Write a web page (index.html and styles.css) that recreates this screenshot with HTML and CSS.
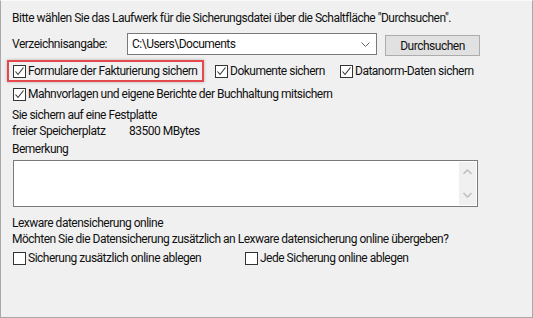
FILE: index.html
```html
<!DOCTYPE html>
<html>
<head>
  <title>Datensicherung</title>
  <link rel="stylesheet" href="styles.css">
</head>
<body>
  <div class="dialog">
    <div class="line">Bitte wählen Sie das Laufwerk für die Sicherungsdatei über die Schaltfläche "Durchsuchen".</div>

    <div class="dir-row">
      <span class="dir-label">Verzeichnisangabe:</span>
      <div class="combo">
        <span>C:\Users\Documents</span>
        <svg class="chevron" width="9" height="5" viewBox="0 0 9 5"><path d="M0.5 0.5 L4.5 4.5 L8.5 0.5" fill="none" stroke="#606060" stroke-width="1"/></svg>
      </div>
      <button class="btn">Durchsuchen</button>
    </div>

    <div class="check-row first">
      <label class="check w1 marked">
        <span class="box"><svg width="11" height="11" viewBox="0 0 11 11"><path d="M1.5 5.5 L4 8.5 L9.5 1.5" fill="none" stroke="#333" stroke-width="1.1"/></svg></span>
        Formulare der Fakturierung sichern
      </label>
      <label class="check w2">
        <span class="box"><svg width="11" height="11" viewBox="0 0 11 11"><path d="M1.5 5.5 L4 8.5 L9.5 1.5" fill="none" stroke="#333" stroke-width="1.1"/></svg></span>
        Dokumente sichern
      </label>
      <label class="check">
        <span class="box"><svg width="11" height="11" viewBox="0 0 11 11"><path d="M1.5 5.5 L4 8.5 L9.5 1.5" fill="none" stroke="#333" stroke-width="1.1"/></svg></span>
        Datanorm-Daten sichern
      </label>
    </div>

    <div class="check-row second">
      <label class="check">
        <span class="box"><svg width="11" height="11" viewBox="0 0 11 11"><path d="M1.5 5.5 L4 8.5 L9.5 1.5" fill="none" stroke="#333" stroke-width="1.1"/></svg></span>
        Mahnvorlagen und eigene Berichte der Buchhaltung mitsichern
      </label>
    </div>

    <div class="line disk">Sie sichern auf eine Festplatte</div>
    <div class="line"><span class="free-label">freier Speicherplatz</span>83500 MBytes</div>
    <div class="line remark">Bemerkung</div>

    <div class="memo">
      <div class="memo-scroll">
        <svg width="9" height="6" viewBox="0 0 9 6"><path d="M0.5 5 L4.5 1 L8.5 5" fill="none" stroke="#c2c2c2" stroke-width="1.6"/></svg>
        <svg width="9" height="6" viewBox="0 0 9 6"><path d="M0.5 1 L4.5 5 L8.5 1" fill="none" stroke="#c2c2c2" stroke-width="1.6"/></svg>
      </div>
    </div>

    <div class="line online">Lexware datensicherung online</div>
    <div class="line">Möchten Sie die Datensicherung zusätzlich an Lexware datensicherung online übergeben?</div>

    <div class="check-row third">
      <label class="check w3">
        <span class="box"></span>
        Sicherung zusätzlich online ablegen
      </label>
      <label class="check">
        <span class="box"></span>
        Jede Sicherung online ablegen
      </label>
    </div>
  </div>
</body>
</html>
```

FILE: styles.css
```css
body {
  margin: 0;
  font-family: Roboto, "Liberation Sans", sans-serif;
  font-size: 12px;
  letter-spacing: -0.5px;
  color: #111;
  background-color: #f0f0f0;
}

.dialog {
  width: 533px;
  height: 318px;
  box-sizing: border-box;
  border-left: 1px solid #a8a8a8;
  border-right: 1px solid #a8a8a8;
  border-bottom: 1px solid #a8a8a8;
  border-top: 1px solid #fafafa;
  background-color: #f0f0f0;
  padding: 9px 0 0 11px;
}

.line {
  line-height: 16px;
  height: 16px;
  white-space: nowrap;
}

.dir-row {
  display: flex;
  align-items: flex-start;
  margin-top: 7px;
  height: 22px;
}

.dir-label {
  width: 115px;
  line-height: 22px;
}

.combo {
  width: 250px;
  height: 22px;
  box-sizing: border-box;
  border: 1px solid #7a7a7a;
  background-color: #fff;
  display: flex;
  align-items: center;
  justify-content: space-between;
  padding: 0 6px 0 4px;
}

.btn {
  margin: 2px 0 0 8px;
  width: 95px;
  height: 21px;
  box-sizing: border-box;
  border: 1px solid #adadad;
  background-color: #e1e1e1;
  font-family: inherit;
  font-size: 12px;
  letter-spacing: -0.5px;
  color: #111;
  padding: 0;
}

.check-row {
  display: flex;
  height: 16px;
  line-height: 16px;
}

.check-row.first {
  margin-top: 8px;
}

.check-row.second {
  margin-top: 7px;
}

.check-row.third {
  margin-top: 3px;
}

.check {
  position: relative;
  display: flex;
  align-items: center;
  white-space: nowrap;
}

.check.w1 {
  margin-left: 1px;
  width: 202px;
}

.check.w2 {
  width: 125px;
}

.check.w3 {
  margin-left: 1px;
  width: 232px;
}

.check-row.second .check {
  margin-left: 1px;
}

.box {
  flex: none;
  width: 13px;
  height: 13px;
  box-sizing: border-box;
  border: 1px solid #333;
  background-color: #fff;
  margin-right: 2px;
  display: flex;
  align-items: center;
  justify-content: center;
}

.check.marked::after {
  content: "";
  position: absolute;
  left: -6px;
  top: -3px;
  width: 193px;
  height: 18px;
  border: 2px solid #e5484d;
  box-shadow: 0 0 3px rgba(0, 0, 0, 0.25);
}

.disk {
  margin-top: 5px;
}

.free-label {
  display: inline-block;
  width: 117px;
}

.remark {
  margin-top: 2px;
}

.memo {
  margin: 3px 0 0 1px;
  width: 465px;
  height: 47px;
  box-sizing: border-box;
  border: 1px solid #7a7a7a;
  background-color: #fff;
  display: flex;
  justify-content: flex-end;
  padding: 1px;
}

.memo-scroll {
  width: 17px;
  background-color: #f0f0f0;
  display: flex;
  flex-direction: column;
  align-items: center;
  justify-content: space-between;
  padding: 7px 0 7px;
  box-sizing: border-box;
}

.online {
  margin-top: 8px;
}
```
